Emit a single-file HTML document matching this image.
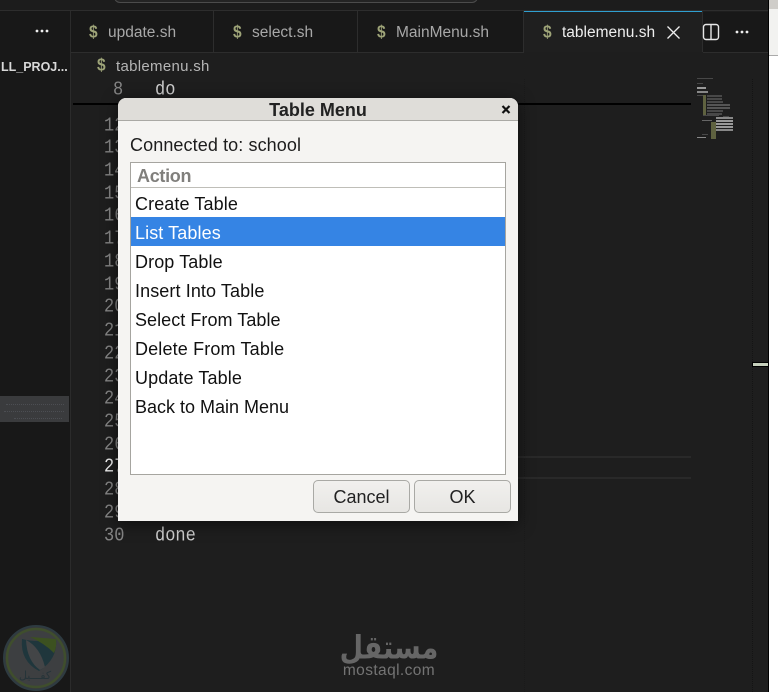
<!DOCTYPE html>
<html><head><meta charset="utf-8"><style>
html,body{margin:0;padding:0;background:#1e1e1e}
#p{position:relative;width:778px;height:692px;overflow:hidden;background:#1e1e1e;font-family:"Liberation Sans",sans-serif}
#p div,#p span.a{position:absolute;white-space:nowrap}
.tab{top:11px;height:41px;background:#181818;border-right:1px solid #2d2d2d;box-sizing:border-box}
.t{font-size:15.5px;top:24px;color:#a8a8a8}
.d{font-size:15.5px;font-weight:bold;color:#9ea478;transform:scale(1,1.15)}
.n{left:104px;font-family:"Liberation Mono",monospace;font-size:17px;color:#858585;line-height:20px;transform:scale(1,1.15);transform-origin:50% 50%}
.c{font-family:'Liberation Mono',monospace;font-size:17px;color:#cfcfcf;line-height:20px;transform:scale(1,1.15)}
.i{left:135px;font-size:18px;color:#111;line-height:22px;letter-spacing:.1px}
.btn{top:480px;height:33px;box-sizing:border-box;border:1px solid #a9a9a5;border-radius:5px;background:linear-gradient(#f1f0ee,#e7e6e3);text-align:center;font-size:18px;line-height:33px;color:#222}
</style></head><body><div id="p">
<div style="left:0;top:0;width:70px;height:692px;background:#181818"></div>
<div style="left:70px;top:0;width:1px;height:692px;background:#2b2b2b"></div>
<div style="left:0;top:0;width:768px;height:10px;background:#1c1c1c;border-bottom:1px solid #2d2d2d"></div>
<div style="left:114px;top:-10px;width:364px;height:13px;box-sizing:border-box;border:1px solid #4c4c4c;border-radius:6px;background:#242424"></div>

<div class="tab" style="left:71px;width:143px"></div>
<div class="tab" style="left:214px;width:144px"></div>
<div class="tab" style="left:358px;width:166px"></div>
<div style="left:524px;top:11px;width:179px;height:41px;background:#1f1f1f;border-right:1px solid #2d2d2d;box-sizing:border-box"></div>
<div style="left:524px;top:11px;width:178px;height:1px;background:#2f9fd0"></div>
<div style="left:703px;top:12px;width:65px;height:40px;background:#181818"></div>
<div style="left:71px;top:52px;width:453px;height:1px;background:#2d2d2d"></div>
<div style="left:703px;top:52px;width:65px;height:1px;background:#2d2d2d"></div>

<svg style="position:absolute;left:34px;top:27px" width="16" height="8"><circle cx="3" cy="4" r="1.4" fill="#eee"/><circle cx="8" cy="4" r="1.4" fill="#eee"/><circle cx="13" cy="4" r="1.4" fill="#eee"/></svg>
<div style="left:1px;top:60px;color:#d8d8d8;font-size:12.5px;font-weight:bold">LL_PROJ...</div>

<div class="d" style="left:89px;top:24px">$</div><div class="t" style="left:108px">update.sh</div>
<div class="d" style="left:233px;top:24px">$</div><div class="t" style="left:252px">select.sh</div>
<div class="d" style="left:377px;top:24px">$</div><div class="t" style="left:396px">MainMenu.sh</div>
<div class="d" style="left:543px;top:24px">$</div><div class="t" style="left:562px;color:#eee">tablemenu.sh</div>
<svg style="position:absolute;left:667px;top:26px" width="13" height="13"><path d="M.5 .5L12.5 12.5M12.5 .5L.5 12.5" stroke="#eee" stroke-width="1.3"/></svg>
<svg style="position:absolute;left:701px;top:22px" width="20" height="20"><rect x="2.5" y="2.5" width="15" height="15" rx="2.5" fill="none" stroke="#e6e6e6" stroke-width="1.4"/><path d="M10 2.5V17.5" stroke="#e6e6e6" stroke-width="1.4"/></svg>
<svg style="position:absolute;left:734px;top:28px" width="16" height="8"><circle cx="3" cy="4" r="1.4" fill="#eee"/><circle cx="8" cy="4" r="1.4" fill="#eee"/><circle cx="13" cy="4" r="1.4" fill="#eee"/></svg>

<div class="d" style="left:97px;top:57px">$</div>
<div style="left:116px;top:58px;font-size:15px;color:#b5b5b5;letter-spacing:.3px">tablemenu.sh</div>

<div class="n" style="top:81px;left:113px">8</div>
<div class="c" style="left:155px;top:81px">do</div>

<div style="left:524px;top:79px;width:0;height:613px;border-left:1px dotted #1a1a1a"></div>
<div style="left:752px;top:79px;width:0;height:613px;border-left:1px dotted #141414"></div>

<div style="left:73px;top:103px;width:618px;height:2px;background:#000"></div>

<div class="n" style="top:117px">12</div>
<div class="n" style="top:139px">13</div>
<div class="n" style="top:162px">14</div>
<div class="n" style="top:185px">15</div>
<div class="n" style="top:207px">16</div>
<div class="n" style="top:230px">17</div>
<div class="n" style="top:253px">18</div>
<div class="n" style="top:276px">19</div>
<div class="n" style="top:298px">20</div>
<div class="n" style="top:322px">21</div>
<div class="n" style="top:345px">22</div>
<div class="n" style="top:368px">23</div>
<div class="n" style="top:390px">24</div>
<div class="n" style="top:413px">25</div>
<div class="n" style="top:436px">26</div>
<div class="n" style="top:458px;color:#eee">27</div>
<div class="n" style="top:481px">28</div>
<div class="n" style="top:504px">29</div>
<div class="n" style="top:527px">30</div>
<div class="c" style="left:155px;top:527px">done</div>

<div style="left:518px;top:456px;width:173px;height:2px;background:#292929"></div>
<div style="left:518px;top:477px;width:173px;height:2px;background:#292929"></div>

<div style="left:0;top:396px;width:69px;height:26px;background:#3a3b3d"></div>
<div style="left:6px;top:404px;width:58px;height:0;border-top:1px dotted #4c4e53"></div>
<div style="left:4px;top:411px;width:60px;height:0;border-top:1px dotted #4c4e53"></div>
<div style="left:14px;top:418px;width:48px;height:0;border-top:1px dotted #4c4e53"></div>

<div style="left:752px;top:362px;width:16px;height:5px;background:#000"></div>
<div style="left:753px;top:363px;width:15px;height:3px;background:#c6d0bc"></div>
<div style="left:769px;top:0;width:9px;height:692px;background:#fff"></div>
<div style="left:768px;top:0;width:1px;height:692px;background:#000"></div>
<div style="left:769px;top:0;width:9px;height:55px;background:#f2f2f0"></div>
<div style="left:769px;top:0;width:9px;height:9px;background:#cfcdc9"></div>
<div style="left:769px;top:55px;width:9px;height:1px;background:#aaa"></div>

<!-- minimap -->
<svg style="position:absolute;left:697px;top:78px" width="40" height="62">
<g fill="#484848">
<rect x="0" y="0" width="16" height="1"/><rect x="0" y="5" width="6" height="1"/>
<rect x="0" y="9" width="9" height="2" fill="#999"/><rect x="0" y="13" width="11" height="2" fill="#888"/>
<rect x="0" y="17" width="8" height="1"/>
<rect x="6" y="17" width="3" height="20" fill="#5f6240"/>
<rect x="10" y="17" width="15" height="2"/><rect x="10" y="20" width="15" height="2"/><rect x="10" y="23" width="16" height="2"/><rect x="10" y="26" width="23" height="2" fill="#555"/><rect x="10" y="29" width="23" height="2" fill="#555"/><rect x="10" y="32" width="16" height="2"/><rect x="10" y="35" width="15" height="2"/>
<rect x="6" y="37" width="16" height="1"/><rect x="26" y="38" width="6" height="1"/>
<rect x="5" y="42" width="10" height="1" fill="#666"/>
<rect x="14" y="44" width="5" height="17" fill="#5f6240"/>
<rect x="19" y="39" width="17" height="2" fill="#888"/><rect x="19" y="42" width="17" height="2" fill="#999"/><rect x="19" y="45" width="17" height="2" fill="#999"/><rect x="19" y="48" width="17" height="2" fill="#999"/><rect x="19" y="51" width="17" height="2" fill="#888"/>
<rect x="5" y="56" width="6" height="1"/><rect x="0" y="59" width="9" height="1" fill="#888"/>
</g>
</svg>

<!-- dialog -->
<div style="left:118px;top:98px;width:400px;height:423px;background:#f5f4f2;border-radius:8px 8px 0 0;box-shadow:0 3px 16px rgba(0,0,0,.55)"></div>
<div style="left:118px;top:98px;width:400px;height:22px;background:#dfddd9;border-bottom:1px solid #aaa9a5;border-radius:8px 8px 0 0"></div>
<div style="left:118px;top:100px;width:400px;text-align:center;font-size:18px;font-weight:bold;color:#222;line-height:21px">Table Menu</div>
<svg style="position:absolute;left:501px;top:104px" width="10" height="11"><path d="M1.5 2L8.5 9M8.5 2L1.5 9" stroke="#111" stroke-width="2.2"/></svg>
<div style="left:130px;top:134px;font-size:18px;color:#1c1c1c;line-height:22px;letter-spacing:.1px">Connected to: school</div>

<div style="left:130px;top:162px;width:376px;height:313px;box-sizing:border-box;border:1px solid #a6a5a0;background:#fff"></div>
<div style="left:131px;top:187px;width:374px;height:1px;background:#bfbeb8"></div>
<div style="left:137px;top:165px;font-size:18px;font-weight:bold;color:#807f7c;line-height:22px;letter-spacing:-.3px">Action</div>
<div style="left:131px;top:217px;width:374px;height:29px;background:#3584e4"></div>

<div class="i" style="top:193px">Create Table</div>
<div class="i" style="top:222px;color:#fff">List Tables</div>
<div class="i" style="top:251px">Drop Table</div>
<div class="i" style="top:280px">Insert Into Table</div>
<div class="i" style="top:309px;letter-spacing:.05px">Select From Table</div>
<div class="i" style="top:338px;letter-spacing:.15px">Delete From Table</div>
<div class="i" style="top:367px">Update Table</div>
<div class="i" style="top:396px;letter-spacing:0">Back to Main Menu</div>

<div class="btn" style="left:313px;width:97px">Cancel</div>
<div class="btn" style="left:414px;width:97px">OK</div>

<!-- watermarks -->
<div style="left:335px;top:627px;width:108px;text-align:center;font-family:'DejaVu Sans',sans-serif;font-weight:bold;font-size:27px;color:#666;line-height:44px;transform:scale(1,1.2)">مستقل</div>
<div style="left:330px;top:662px;width:118px;text-align:center;font-size:15.5px;color:#747474;line-height:18px;letter-spacing:.4px">mostaql.com</div>

<svg style="position:absolute;left:2px;top:624px" width="68" height="68" viewBox="0 0 68 68">
<circle cx="34" cy="34" r="32" fill="#37393b" stroke="#2e3b41" stroke-width="2"/>
<circle cx="34" cy="34" r="29" fill="#3d3f41" stroke="#3f4e2d" stroke-width="2.5"/>
<path d="M20 15Q35 19 54 15Q56 35 37 47Q18 37 20 15Z" fill="#1f363c"/>
<path d="M28 13Q42 14 54 15Q55 23 52 29Q42 19 28 13Z" fill="#3c5120"/>
<path d="M24 16Q38 23 43 43L38 46Q25 37 24 16Z" fill="#434547"/>
</svg>
<div style="left:15px;top:669px;width:40px;text-align:center;font-family:'DejaVu Sans',sans-serif;font-size:11px;color:#263439;line-height:13px">كفـــيل</div>
</div></body></html>
